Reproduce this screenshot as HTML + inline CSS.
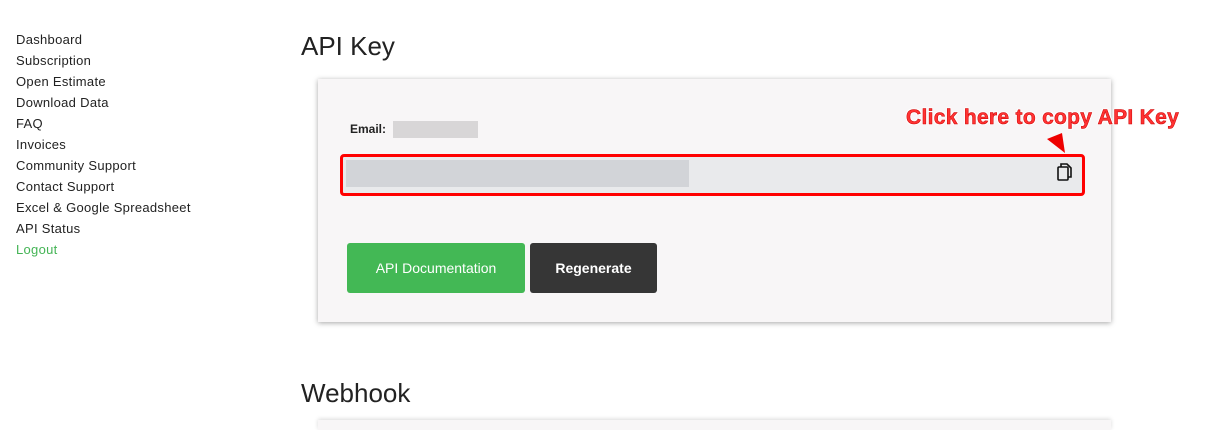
<!DOCTYPE html>
<html><head><meta charset="utf-8"><style>
body{margin:0;width:1205px;height:426px;overflow:hidden;background:#fff;font-family:"Liberation Sans","DejaVu Sans",sans-serif;position:relative}
.nav{position:absolute;left:16px;top:29px;font-size:13px;line-height:21px;color:#222;letter-spacing:0.3px}
.nav div{white-space:nowrap}
h1{position:absolute;left:301px;margin:0;font-weight:normal;font-size:26px;color:#222}
.card{position:absolute;left:318px;top:79px;width:793px;height:243px;background:#f8f6f7;box-shadow:0 1px 5px rgba(0,0,0,.35)}
.abs{position:absolute}
.btn{position:absolute;top:243px;height:50px;border-radius:3px;color:#fff;font-size:14px;line-height:50px;text-align:center}
</style></head><body>
<div class="nav">
<div>Dashboard</div><div>Subscription</div><div>Open Estimate</div><div>Download Data</div><div>FAQ</div><div>Invoices</div><div>Community Support</div><div>Contact Support</div><div>Excel &amp; Google Spreadsheet</div><div>API Status</div><div style="color:#44b455">Logout</div>
</div>
<h1 style="top:31px">API Key</h1>
<div class="card"></div>
<div class="abs" style="left:350px;top:122px;font-size:12px;font-weight:bold;color:#222">Email:</div>
<div class="abs" style="left:393px;top:121px;width:85px;height:17px;background:#d8d6d7"></div>
<div class="abs" style="left:340px;top:154px;width:739px;height:36px;border:3px solid #f00;border-radius:4px;background:#e9eaec"></div>
<div class="abs" style="left:346px;top:160px;width:343px;height:27px;background:#d2d4d8"></div>
<svg class="abs" style="left:1056px;top:162px" width="18" height="20" viewBox="0 0 18 20"><path d="M5 5V2h6l4 4v9h-3" fill="none" stroke="#111" stroke-width="1.6"/><rect x="2" y="5" width="10" height="13" rx="1" fill="none" stroke="#111" stroke-width="1.6"/></svg>
<div class="abs" style="left:906px;top:106px;font-size:21px;font-weight:bold;color:#f33;letter-spacing:0.3px;-webkit-text-stroke:0.5px #c00;text-shadow:0 0 2px #fff,1px 1px 0 #fff,-1px -1px 0 #fff,1px -1px 0 #fff,-1px 1px 0 #fff">Click here to copy API Key</div>
<svg class="abs" style="left:1045px;top:133px" width="22" height="22"><path d="M2 6L17 0 20 20z" fill="#e00"/></svg>
<div class="btn" style="left:347px;width:178px;background:#43b855">API Documentation</div>
<div class="btn" style="left:530px;width:127px;background:#363636;font-weight:bold">Regenerate</div>
<h1 style="top:378px">Webhook</h1>
<div class="abs" style="left:318px;top:420px;width:793px;height:10px;background:#f8f6f7;box-shadow:0 -1px 4px rgba(0,0,0,.15)"></div>
</body></html>
